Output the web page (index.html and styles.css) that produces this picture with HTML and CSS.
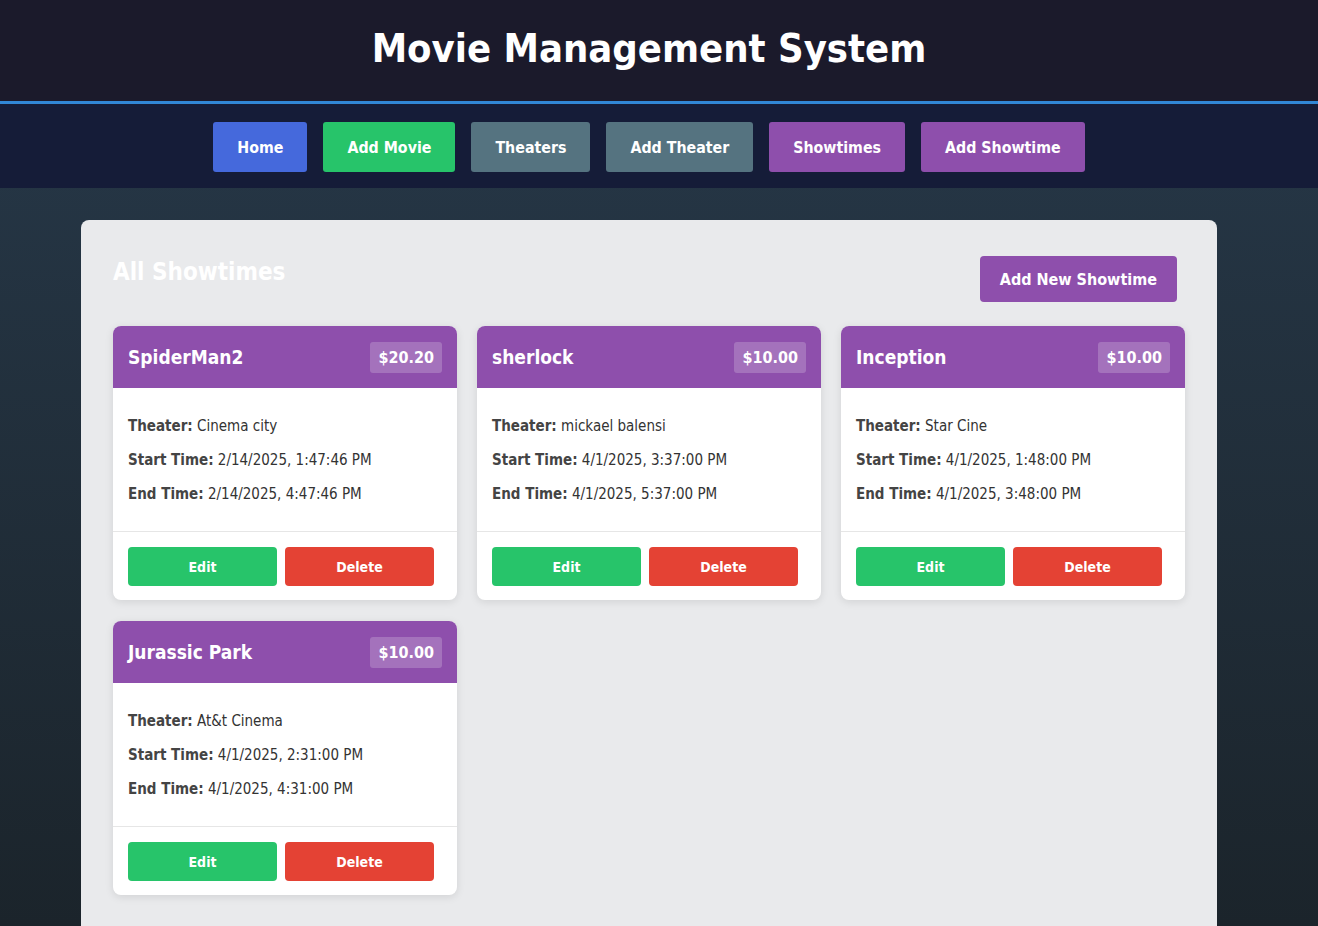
FILE: index.html
```html
<!DOCTYPE html>
<html lang="en">
<head>
<meta charset="utf-8">
<title>Movie Management System</title>
<link rel="stylesheet" href="styles.css">
</head>
<body>
<header class="site-header">
  <h1 class="site-title">Movie Management System</h1>
</header>
<nav class="site-nav">
  <a class="nav-btn blue" href="#">Home</a>
  <a class="nav-btn green" href="#">Add Movie</a>
  <a class="nav-btn slate" href="#">Theaters</a>
  <a class="nav-btn slate" href="#">Add Theater</a>
  <a class="nav-btn purple" href="#">Showtimes</a>
  <a class="nav-btn purple" href="#">Add Showtime</a>
</nav>
<main class="main">
  <section class="panel">
    <div class="panel-head">
      <h2 class="panel-title">All Showtimes</h2>
      <a class="add-btn" href="#">Add New Showtime</a>
    </div>
    <div class="grid">
      <article class="card">
        <div class="card-head"><h3 class="card-title">SpiderMan2</h3><span class="price">$20.20</span></div>
        <div class="card-body">
          <p><strong>Theater:</strong> Cinema city</p>
          <p><strong>Start Time:</strong> 2/14/2025, 1:47:46 PM</p>
          <p><strong>End Time:</strong> 2/14/2025, 4:47:46 PM</p>
        </div>
        <div class="card-foot"><a class="act edit" href="#">Edit</a><a class="act del" href="#">Delete</a></div>
      </article>
      <article class="card">
        <div class="card-head"><h3 class="card-title">sherlock</h3><span class="price">$10.00</span></div>
        <div class="card-body">
          <p><strong>Theater:</strong> mickael balensi</p>
          <p><strong>Start Time:</strong> 4/1/2025, 3:37:00 PM</p>
          <p><strong>End Time:</strong> 4/1/2025, 5:37:00 PM</p>
        </div>
        <div class="card-foot"><a class="act edit" href="#">Edit</a><a class="act del" href="#">Delete</a></div>
      </article>
      <article class="card">
        <div class="card-head"><h3 class="card-title">Inception</h3><span class="price">$10.00</span></div>
        <div class="card-body">
          <p><strong>Theater:</strong> Star Cine</p>
          <p><strong>Start Time:</strong> 4/1/2025, 1:48:00 PM</p>
          <p><strong>End Time:</strong> 4/1/2025, 3:48:00 PM</p>
        </div>
        <div class="card-foot"><a class="act edit" href="#">Edit</a><a class="act del" href="#">Delete</a></div>
      </article>
      <article class="card">
        <div class="card-head"><h3 class="card-title">Jurassic Park</h3><span class="price">$10.00</span></div>
        <div class="card-body">
          <p><strong>Theater:</strong> At&amp;t Cinema</p>
          <p><strong>Start Time:</strong> 4/1/2025, 2:31:00 PM</p>
          <p><strong>End Time:</strong> 4/1/2025, 4:31:00 PM</p>
        </div>
        <div class="card-foot"><a class="act edit" href="#">Edit</a><a class="act del" href="#">Delete</a></div>
      </article>
    </div>
  </section>
</main>
</body>
</html>
```

FILE: styles.css
```css
* { box-sizing: border-box; }
html, body { height: 100%; }
body {
  margin: 0;
  font-family: "DejaVu Sans Condensed", "DejaVu Sans", sans-serif;
  background: linear-gradient(to bottom, #27394a 0%, #1b242b 100%);
  min-height: 926px;
  overflow: hidden;
}
a { text-decoration: none; color: #fff; }

.site-header {
  background: #1b1a2b;
  padding: 24px 20px 29px 0;
  border-bottom: 3px solid #3187d6;
  text-align: center;
}
.site-title {
  margin: 0;
  font-size: 39.6px;
  line-height: 48px;
  font-weight: bold;
  color: #fff;
}

.site-nav {
  background: #151c38;
  padding: 18px 20px 16px 0;
  display: flex;
  justify-content: center;
  gap: 16px;
}
.nav-btn {
  display: flex;
  align-items: center;
  height: 50px;
  padding: 0 24px;
  border-radius: 3px;
  font-size: 15.8px;
  font-weight: bold;
}
.blue { background: #4569dc; }
.green { background: #27c46a; }
.slate { background: #557380; }
.purple { background: #8e4fac; }

.main {
  padding: 32px 20px 0 0;
}
.panel {
  width: 1136px;
  margin: 0 auto;
  background: #e9eaec;
  border-radius: 8px;
  padding: 32px;
  min-height: 720px;
}
.panel-head {
  display: flex;
  justify-content: space-between;
  align-items: flex-start;
  height: 50px;
  margin-bottom: 24px;
}
.panel-title {
  margin: 0;
  font-size: 24px;
  line-height: 40px;
  color: #fff;
}
.add-btn {
  margin-top: 4px;
  margin-right: 8px;
  height: 46px;
  display: flex;
  align-items: center;
  padding: 0 20px;
  border-radius: 4px;
  background: #8e4fac;
  font-size: 16px;
  font-weight: bold;
}

.grid {
  display: grid;
  grid-template-columns: repeat(3, 344px);
  column-gap: 20px;
  row-gap: 21px;
}
.card {
  background: #fff;
  border-radius: 8px;
  overflow: hidden;
  box-shadow: 0 2px 8px rgba(0, 0, 0, 0.1);
}
.card-head {
  background: #8e4fac;
  padding: 15px;
  height: 62px;
  display: flex;
  justify-content: space-between;
  align-items: center;
}
.card-title {
  margin: 0;
  font-size: 19px;
  color: #fff;
}
.price {
  background: rgba(255, 255, 255, 0.2);
  color: #fff;
  font-weight: bold;
  font-size: 16px;
  line-height: 31px;
  height: 31px;
  padding: 0 8px;
  border-radius: 3px;
}
.card-body {
  padding: 16px 15px 15px;
}
.card-body p {
  margin: 10px 0;
  font-size: 15px;
  line-height: 24px;
  color: #333;
}
.card-body strong { color: #444; }
.card-foot {
  border-top: 1px solid #e6e6e6;
  padding: 15px 15px 14px;
  display: flex;
  gap: 8px;
}
.act {
  width: 149px;
  height: 39px;
  display: flex;
  align-items: center;
  justify-content: center;
  border-radius: 4px;
  font-size: 14px;
  font-weight: bold;
}
.edit { background: #27c46a; }
.del { background: #e44234; }
```
